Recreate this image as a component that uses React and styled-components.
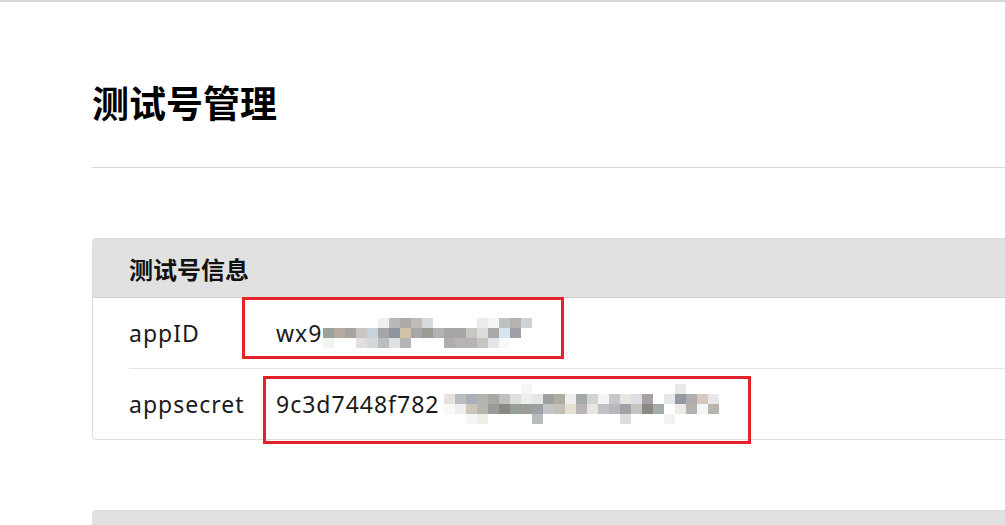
import React from "react";
import styled, { createGlobalStyle } from "styled-components";

const GlobalStyle = createGlobalStyle`
  html, body {
    margin: 0;
    padding: 0;
    background: #fff;
    overflow: hidden;
  }
  body {
    font-family: "Noto Sans", "Noto Sans CJK SC", sans-serif;
    color: #1a1a1a;
  }
`;

const TopLine = styled.div`
  height: 2px;
  background: #d6d6d6;
`;

const Page = styled.div`
  width: 1200px;
  padding: 80px 0 0 92px;
`;

const Title = styled.h1`
  margin: 0;
  font-family: "Noto Sans CJK SC", sans-serif;
  font-size: 37px;
  line-height: 40px;
  font-weight: 700;
  color: #000;
`;

const Divider = styled.hr`
  margin: 45px 0 70px;
  border: 0;
  border-top: 1px solid #d9d9d9;
`;

const Panel = styled.section`
  position: relative;
  border: 1px solid #dcdcdc;
  border-radius: 4px;
  margin-bottom: 70px;
`;

const PanelHead = styled.div`
  height: 58px;
  display: flex;
  align-items: center;
  padding-left: 36px;
  background: #e1e1e1;
  border-bottom: 1px solid #cfcfcf;
  border-radius: 3px 3px 0 0;
  font-family: "Noto Sans CJK SC", sans-serif;
  font-size: 24px;
  font-weight: 700;
  color: #111;
`;

const Rows = styled.div`
  padding: 0 0 0 36px;
`;

const Row = styled.div`
  display: flex;
  align-items: center;
  height: 70px;
  border-top: ${(p) => (p.$first ? "0" : "1px solid #e4e4e4")};
  font-size: 23px;
  letter-spacing: 1px;
`;

const Label = styled.div`
  width: 147px;
  flex: none;
`;

const Value = styled.div`
  display: flex;
  align-items: center;
  white-space: nowrap;
`;

const Mosaic = styled.span`
  display: inline-grid;
  grid-template-columns: repeat(${(p) => p.$cols}, 11px);
  grid-auto-rows: 10px;
  margin-left: ${(p) => p.$gap}px;
  margin-top: ${(p) => p.$shift}px;
`;

const Cell = styled.span`
  background: ${(p) => p.$c || "transparent"};
`;

const Mark = styled.div`
  position: absolute;
  border: 3px solid #e3222b;
  pointer-events: none;
`;

const _ = null;

const idPixels = [
  [_, _, _, _, _, "#eef0f2", "#b8b9b9", "#aeaaa8", "#c0bcb8", "#d6dadd", _, _, _, _, "#ebebeb", "#f5f5f3", "#bfc2c5", "#b6b2af", "#cdd2d6"],
  ["#9aa39a", "#b4aaa0", "#a9a39e", "#c8c6c0", "#c7d3dc", "#a5a5a5", "#8d96a0", "#d2c2a6", "#a7a7a7", "#9b9d93", "#b1b3b3", "#a7a6a5", "#a8a6a5", "#c8c6c2", "#dadcdd", "#aaa8a6", "#d6e6ee", "#9e9ea6", _],
  ["#f2f4f2", _, _, "#e2dde0", "#d2d8d8", "#b8bdc0", "#dfe0e3", "#b5b5b5", _, _, _, "#b2adab", "#b6b4b6", "#b8b3b6", "#c6c6c0", "#e6e6ea", "#f8f8f8", _, _],
];

const secretPixels = [
  [_, _, _, _, _, _, _, "#f6f6f6", _, _, _, _, _, _, _, _, _, _, _, _, _, "#e6e8ea", _, _, _],
  ["#e8e2dc", "#b8bcbc", "#aab0b8", "#b6b4b0", "#a8a8a4", "#bfbfbd", "#dedfdb", "#eeeeee", "#e6e6e6", "#9ea09e", "#b0aca2", "#eeeeee", "#a4aaa6", "#d0d4d4", "#f4f4f6", "#c4c8cc", "#e8e4e0", "#dcdee4", "#a8a0a4", _, "#e4e8ea", "#949aa4", "#b0aeac", "#d8c8c0", "#e8e8ec"],
  ["#f8f8f8", "#eeeeee", "#ccc4b8", "#b8b4b0", "#9a9a9a", "#868a80", "#94a094", "#9c9c98", "#9aa2a8", "#c4c4c8", "#c4c0b8", "#e4e0d4", "#b8b4b4", "#e8e6e2", "#c0c0c8", "#b8b8bc", "#a0a4a8", "#c4c4c4", "#8c8884", "#a4acac", _, "#ecebe8", "#b4b0ae", "#f4f6f8", "#b8b4b0"],
  [_, _, "#f4f6f8", "#f0ece8", _, _, _, _, "#b8bcbc", _, _, _, _, _, _, _, "#dcdcdc", _, _, _, "#f2f2f2", _, _, _, _],
];

function Pixelated({ pixels, gap, shift }) {
  return (
    <Mosaic $cols={pixels[0].length} $gap={gap} $shift={shift}>
      {pixels.flat().map((c, i) => (
        <Cell key={i} $c={c} />
      ))}
    </Mosaic>
  );
}

export default function App() {
  return (
    <>
      <GlobalStyle />
      <TopLine />
      <Page>
        <Title>测试号管理</Title>
        <Divider />
        <Panel>
          <PanelHead>测试号信息</PanelHead>
          <Rows>
            <Row $first>
              <Label>appID</Label>
              <Value>
                wx9
                <Pixelated pixels={idPixels} gap={1} shift={0} />
              </Value>
            </Row>
            <Row>
              <Label>appsecret</Label>
              <Value>
                9c3d7448f782
                <Pixelated pixels={secretPixels} gap={4} shift={0} />
              </Value>
            </Row>
          </Rows>
          <Mark style={{ left: 149, top: 58, width: 316, height: 56 }} />
          <Mark style={{ left: 170, top: 137, width: 482, height: 62 }} />
        </Panel>
        <Panel>
          <PanelHead />
        </Panel>
      </Page>
    </>
  );
}
